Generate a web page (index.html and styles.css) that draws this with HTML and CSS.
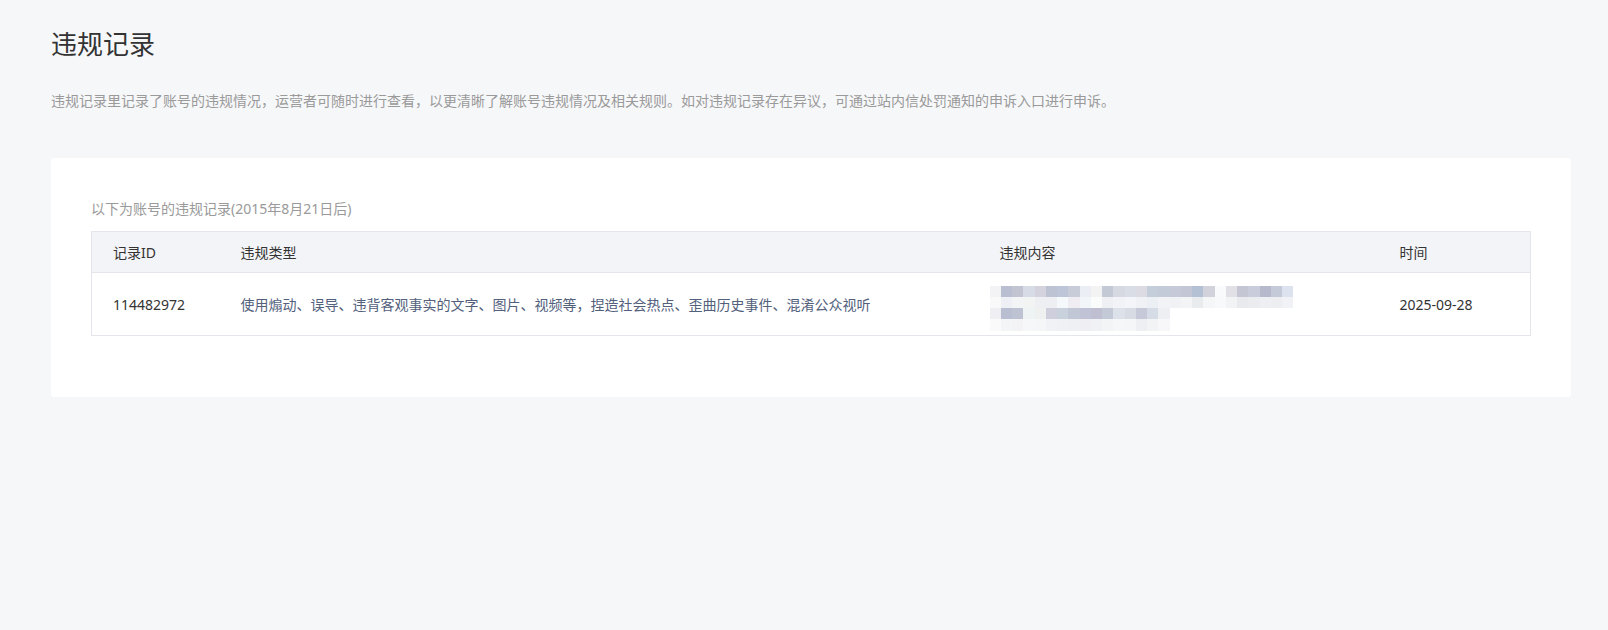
FILE: index.html
```html
<!DOCTYPE html>
<html lang="zh-CN">
<head>
    <meta charset="UTF-8">
    <meta name="viewport" content="width=device-width, initial-scale=1.0">
    <title>违规记录</title>
    <link rel="stylesheet" href="styles.css">
</head>
<body>
    <div class="page">
        <h1 class="page-title">违规记录</h1>
        <p class="page-desc">违规记录里记录了账号的违规情况，运营者可随时进行查看，以更清晰了解账号违规情况及相关规则。如对违规记录存在异议，可通过站内信处罚通知的申诉入口进行申诉。</p>

        <div class="card">
            <div class="card-caption">以下为账号的违规记录(2015年8月21日后)</div>
            <table class="record-table">
                <colgroup>
                    <col class="col-id">
                    <col class="col-type">
                    <col class="col-content">
                    <col class="col-time">
                </colgroup>
                <thead>
                    <tr>
                        <th>记录ID</th>
                        <th>违规类型</th>
                        <th>违规内容</th>
                        <th>时间</th>
                    </tr>
                </thead>
                <tbody>
                    <tr>
                        <td>114482972</td>
                        <td class="type-cell">使用煽动、误导、违背客观事实的文字、图片、视频等，捏造社会热点、歪曲历史事件、混淆公众视听</td>
                        <td class="content-cell"><div class="mosaic" id="mosaic"></div></td>
                        <td>2025-09-28</td>
                    </tr>
                </tbody>
            </table>
        </div>
    </div>
    <script>
        // blurred thumbnail of the violating content, one colour per block
        const mosaicRows = [
            ['#f3f2f5','#b9bfd0','#c2c4d2','#d6dbe6','#d4d2dc','#bec3d3','#bcc6d8','#c8cbd8','#eceef6','#f3f3f3','#c4c9d6','#d6d8e2','#d8dde6','#dcdbe3','#c4cedb','#c3cad8','#c6cad8','#c2c6d5','#b4c0d4','#d1d2dc','#f9fafc','#e0e0e6','#c4c6d4','#c9cddb','#b6b8cc','#c5cad8','#dde3ee'],
            ['#f9f9f9','#eef0f5','#f3f4f6','#f2f3f3','#eeeff2','#eeeff3','#f5f9fc','#efedf1','#f3f6f9','#fafbfb','#eef0f3','#f1f3f6','#f4f5f8','#f0f1f4','#ecf0f5','#f2f3f6','#f1f2f5','#f3f4f6','#e9ecef','#f5f6f8','#f7f9fb','#f2f3f5','#e8eaee','#ebecf0','#eeeff3','#eceef2','#f1f2f5'],
            ['#efeef2','#b9bfd0','#bec3d3','#eef3f4','#eff1f0','#cfcedc','#c8d1dc','#c2c7d6','#c0c3d5','#c0bfd2','#c3c9d6','#dde2ea','#d6dbe4','#c6cad8','#d6dce6','#eeeff2'],
            ['#fafafa','#f4f5f7','#f3f3f5','#f6f7f8','#f5f6f7','#f1f2f5','#eff1f4','#eef0f3','#efeff3','#f0f1f4','#f3f4f6','#f6f7f9','#f5f6f8','#eeeff2','#f2f3f5','#f7f7f9']
        ];

        const mosaicElement = document.getElementById('mosaic');
        mosaicRows.forEach((row, r) => {
            row.forEach((color, c) => {
                const cell = document.createElement('span');
                cell.style.gridRow = r + 1;
                cell.style.gridColumn = c + 1;
                cell.style.background = color;
                mosaicElement.appendChild(cell);
            });
        });
    </script>
</body>
</html>
```

FILE: styles.css
```css
body {
    margin: 0;
    background: #f6f7f9;
    font-family: "Noto Sans", "Noto Sans CJK SC", sans-serif;
    color: #333;
}
.page {
    padding: 26px 37px 40px 51px;
}
.page-title {
    margin: 0;
    font-size: 26px;
    line-height: 36px;
    font-weight: normal;
    color: #333;
}
.page-desc {
    margin: 29px 0 0;
    font-size: 14px;
    line-height: 20px;
    color: #9a9a9a;
}
.card {
    margin-top: 47px;
    background: #fff;
    border-radius: 3px;
    padding: 41px 40px 61px;
}
.card-caption {
    font-size: 14px;
    line-height: 20px;
    color: #9a9a9a;
    margin-bottom: 12px;
}
.record-table {
    width: 100%;
    border-collapse: collapse;
    table-layout: fixed;
    border: 1px solid #e4e6eb;
    font-size: 14px;
}
.col-id { width: 128px; }
.col-type { width: 759px; }
.col-content { width: 400px; }
.record-table th {
    background: #f3f4f7;
    height: 40px;
    padding: 0 0 0 21px;
    text-align: left;
    font-weight: normal;
    color: #333;
    border-bottom: 1px solid #e4e6eb;
}
.record-table td {
    height: 62px;
    padding: 0 0 0 21px;
    color: #333;
    vertical-align: middle;
}
.record-table td.type-cell {
    color: #52607c;
}
.record-table td.content-cell {
    padding-left: 11px;
}
.mosaic {
    display: grid;
    grid-template-columns: repeat(27, 11.25px);
    grid-template-rows: repeat(4, 11.25px);
    margin-top: 8px;
}
```
